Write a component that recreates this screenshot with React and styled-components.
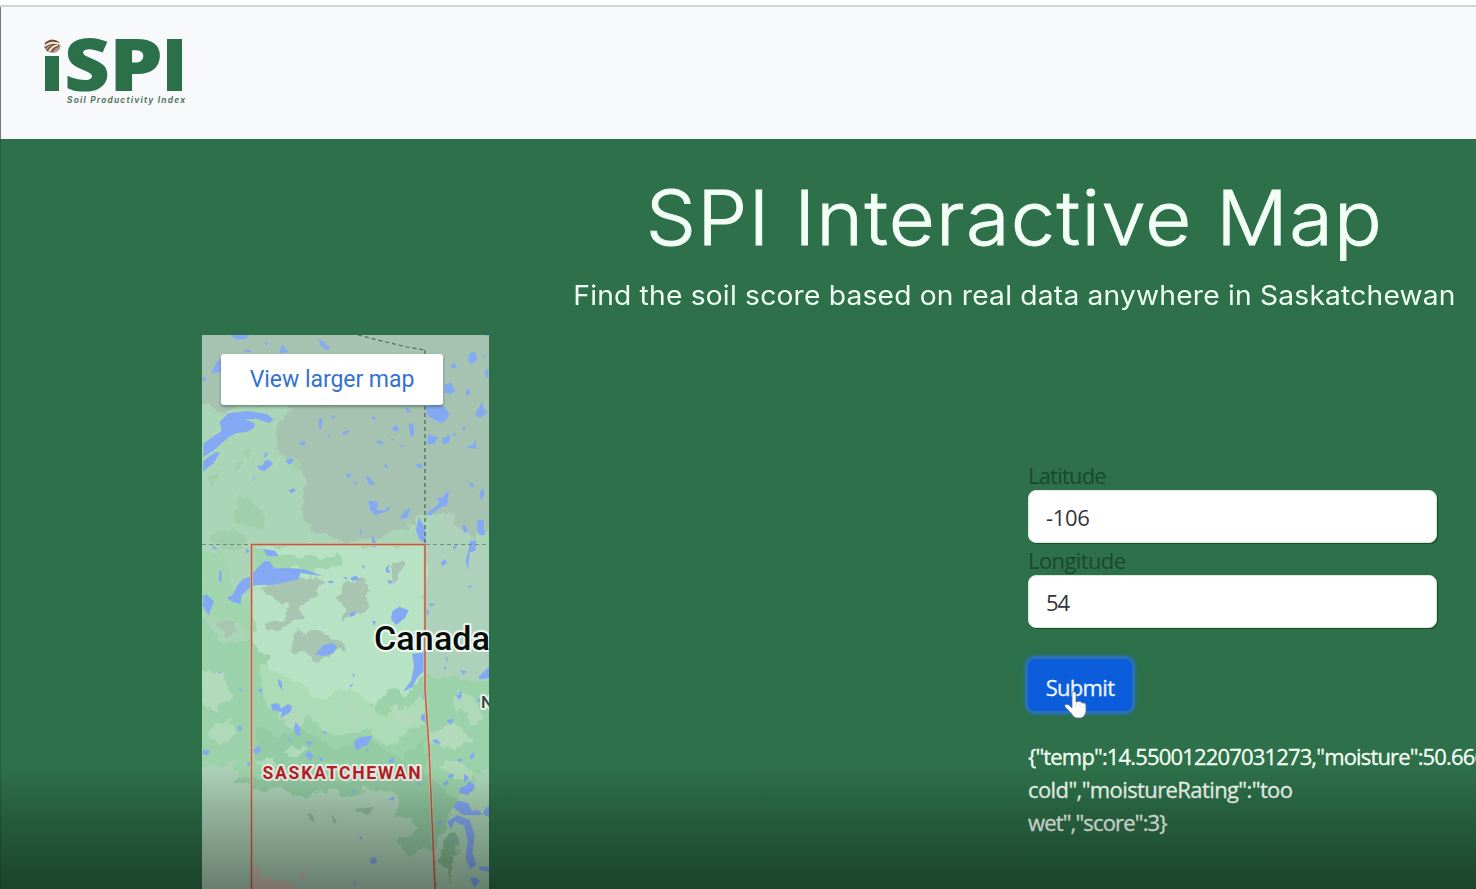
import React from 'react';
import styled, { createGlobalStyle } from 'styled-components';

const GlobalStyle = createGlobalStyle`
  * { box-sizing: border-box; }
  html, body { margin: 0; overflow: hidden; background: #2d7049; }
`;

const Viewport = styled.div`
  position: relative;
  width: 1476px;
  height: 889px;
  overflow: hidden;
  background: #2d7049;
  font-family: 'Open Sans', 'Noto Sans', sans-serif;
  font-size: 22px;
  line-height: 33px;
`;

const Page = styled.div`
  width: 2028px;
`;

const BrowserEdge = styled.div`
  height: 7px;
  background: #fefefe;
  border-bottom: 2px solid #d3d3d4;
`;

const Navbar = styled.header`
  height: 132px;
  padding: 30px 0 0 41px;
  background: #f8f9fb;
  border-left: 1px solid #77797a;
`;

const Hero = styled.main`
  height: 750px;
  padding-top: 34px;
  border-left: 1px solid #265d3c;
  background: #2d7049;
`;

const Heading = styled.h1`
  margin: 0;
  height: 92px;
  text-align: center;
  color: #f3fff6;
  font: 300 75px/90px Inter, sans-serif;
  letter-spacing: ${(p) => p.$spacing};
  transform: scaleX(1.06);
  -webkit-text-stroke: 0.9px #f3fff6;
`;

const Subheading = styled.p`
  margin: 12px 0 0;
  height: 35px;
  text-align: center;
  color: #effff3;
  font: 400 26.5px/36px Inter, sans-serif;
  letter-spacing: ${(p) => p.$spacing};
  transform: scaleX(1.063);
`;

const Columns = styled.div`
  display: flex;
  margin-top: 23px;
  padding-left: 201px;
`;

const MapFrame = styled.section`
  position: relative;
  flex: none;
  width: 287px;
  height: 554px;
  overflow: hidden;
  background: #a6c2b1;
`;

const MapLink = styled.a`
  position: absolute;
  left: 19px;
  top: 19px;
  width: 222px;
  height: 51px;
  border-radius: 3px;
  background: #fff;
  box-shadow: 0 2px 3px rgba(40, 70, 55, 0.45);
  color: #3272d2;
  font: 400 23px/52px Roboto, sans-serif;
  letter-spacing: -0.05px;
  text-align: center;
  white-space: nowrap;
`;

const Form = styled.form`
  width: 409px;
  margin: 124px 0 0 539px;
`;

const Label = styled.label`
  display: block;
  height: 31px;
  color: #1a4a2c;
  line-height: 32px;
  letter-spacing: ${(p) => p.$spacing};
`;

const Input = styled.input`
  display: block;
  width: 409px;
  height: 53px;
  margin: 0 0 ${(p) => p.$gap || '1px'};
  padding: 1px 17px 0;
  border: 1px solid #dbe9df;
  border-radius: 8px;
  background: #fff;
  box-shadow: 1px 1px 0 #115421;
  color: #34343c;
  font: 400 22px/33px 'Open Sans', 'Noto Sans', sans-serif;
  letter-spacing: ${(p) => p.$spacing};
  outline: none;
`;

const Submit = styled.button`
  position: relative;
  display: block;
  width: 104px;
  height: 52px;
  padding: 4px 0 0;
  border: 0;
  border-radius: 7px;
  background: #0b5ddb;
  box-shadow: 0 0 0 3px #2b72b4, 0 0 4px 3px #2b72b4;
  color: #edf5ff;
  font: 500 22px/33px 'Open Sans', 'Noto Sans', sans-serif;
  letter-spacing: -0.7px;
  -webkit-text-stroke: 0.3px #edf5ff;
`;

const Cursor = styled.svg`
  position: absolute;
  left: 36px;
  top: 31px;
`;

const Result = styled.div`
  margin-top: 29px;
  color: #f3fff4;
  font-weight: 500;
  white-space: nowrap;
  -webkit-text-stroke: 0.3px #f3fff4;
`;

const ResultLine = styled.div`
  height: 33px;
  letter-spacing: ${(p) => p.$spacing};
`;

const Shade = styled.div`
  position: absolute;
  left: 0;
  right: 0;
  bottom: 0;
  height: 125px;
  pointer-events: none;
  background: linear-gradient(
    rgba(0, 0, 0, 0),
    rgba(0, 0, 0, 0.03) 10%,
    rgba(0, 0, 0, 0.16) 38%,
    rgba(0, 0, 0, 0.28) 70%,
    rgba(0, 0, 0, 0.4)
  );
`;

const Logo = () => (
  <svg width="150" height="76" viewBox="0 0 150 76" overflow="visible" aria-label="iSPI Soil Productivity Index">
    <path d="M3 19H17V54H3Z" fill="#2b7048" />
    <g fill="#2b7048" fontFamily="'Open Sans', sans-serif" fontWeight="800" fontSize="72">
      <text x="22" y="53.8" textLength="46" lengthAdjust="spacingAndGlyphs">S</text>
      <text x="67" y="53.8" textLength="54" lengthAdjust="spacingAndGlyphs">P</text>
      <text x="119" y="53.8" textLength="27" lengthAdjust="spacingAndGlyphs">I</text>
    </g>
    <text x="25" y="66" textLength="118" fontFamily="Inter, sans-serif" fontWeight="700" fontStyle="italic" fontSize="8.3" fill="#53765f">Soil Productivity Index</text>
    <ellipse cx="10.5" cy="9.3" rx="8" ry="6.8" fill="#b69d8b" />
    <path d="M3 7Q9 1 17 6M3 11Q8 5 17 8M5 14Q8 9 14 7M10 15Q12 10 17 9" fill="none" stroke="#754b31" strokeWidth="1.7" />
    <path d="M3 9Q9 4 18 7M7 14Q10 9 16 8" fill="none" stroke="#f4eee9" strokeWidth="1.5" />
  </svg>
);

const Lakes = ({ d }) => <path d={d} fill="#83a9f4" />;

const ProvinceMap = () => (
  <svg width="287" height="554" viewBox="0 0 287 554">
    <defs>
      <filter id="coast" x="-5%" y="-5%" width="110%" height="110%" colorInterpolationFilters="sRGB">
        <feTurbulence type="fractalNoise" baseFrequency="0.07" numOctaves="3" seed="8" />
        <feDisplacementMap in="SourceGraphic" scale="16" xChannelSelector="R" yChannelSelector="G" />
      </filter>
    </defs>
    <path d="M0 0H287V554H0Z" fill="#a6c2b1" />
    <g filter="url(#coast)">
      <path d="M-10 66L17 78L45 70L90 71L78 86L75 116L98 129L104 151L100 178L111 195L146 210L185 199L219 182L240 177L270 204L297 193V570H-10Z" fill="#abd5b7" />
      <path d="M50 210H224V420H50Z" fill="#b7e2c4" />
      <path d="M242 177L275 205L295 230V355H226V188Z" fill="#aed1bc" />
      <path d="M50 212L94 222L137 219L140 229L112 239L90 234L50 243ZM0 218L18 215L31 254L48 268L50 307L27 282L0 286Z" fill="#a0d5ae" />
      <path d="M-10 278L23 307L50 307L69 334L85 365L105 374L125 364L162 380L185 356L205 360L224 340L295 349V423L238 475L224 456L196 441L171 457L140 447L103 461L88 446L45 452L24 439L-10 439Z" fill="#9bd2a9" />
      <path d="M60 330L97 348L120 365L147 353L182 381L222 363V390L188 410L161 395L131 401L107 380L85 381L62 366Z" fill="#abdcb6" />
      <path d="M54 388L75 403L99 391L132 415L167 404L196 425L223 401V448L192 437L168 448L132 424L96 438L54 421Z" fill="#93cca2" />
      <path d="M-10 438L28 427L43 446L50 448L78 450L103 466L119 454L140 462L191 452L204 477L199 489L214 500L198 517L233 521L240 570H-10Z" fill="#add2b8" />
      <path d="M34 440L62 445L102 438L141 446L187 438L226 440L252 462L246 486L233 516H204L195 506L218 493L193 478L194 459L174 454L143 461L119 452L103 464L84 456L52 454L34 448Z" fill="#91c8a0" />
      <path d="M0 337L21 337L31 364L13 375L0 368ZM185 373L216 375V389L198 392ZM225 395L253 389L271 404L251 414L226 408Z" fill="#b2dabb" />
      <path d="M246 504L254 496L257 521L247 545L235 525Z" fill="#86bd94" />
      <path d="M75 374L95 371L110 382L94 391L79 385ZM12 389L27 382L36 401L21 409L7 400ZM143 377L155 371L163 382L151 390ZM235 431L256 423L276 440L255 446ZM55 428L66 420L76 431L64 435ZM256 354L275 365L284 384L269 391L253 374ZM88 408L104 415L99 423L84 420Z" fill="#afd9b8" />
      <path d="M59 250L93 245L111 239L118 249L111 264L97 271L101 281L91 291L66 296L61 289L79 284L88 270L60 258ZM92 300L115 291L129 305L146 315L129 317L113 328L104 320L88 312ZM142 249L160 243L170 254L161 262L167 272L153 278L139 287L143 276L137 264ZM18 284L34 287L28 302L15 292ZM188 230L202 225L200 237L190 247Z" fill="#a7c5b1" />
      <path d="M39 160L51 166L64 185L59 194L36 188L32 174ZM4 200L32 194L45 202L43 210L22 216L8 208ZM8 142L14 138L16 144L9 153ZM86 126L101 131L91 136ZM35 133L41 128L41 135L30 142ZM41 115L52 121L45 125Z" fill="#a1cfac" />
    </g>
    <path d="M42 554L48 550L51 543L57 536L61 544L68 541L75 547L85 545L94 554ZM50 535L55 530L58 535L52 540ZM99 538L103 534L103 542L100 546L96 545Z" fill="#cdbfb2" />

    <g transform="translate(-7,-5) scale(.33333)">
      <Lakes d="M106 15H164L150 28L121 27ZM208 33L219 40L213 48ZM260 42L281 67L254 70ZM371 29L388 35L393 45L406 50L397 60L377 48ZM22 145L30 140L35 148L23 155ZM49 129L65 97L78 86V127ZM74 276L100 250L157 243L215 252L236 268L222 280L184 266L148 268L180 279L178 293L158 305L124 309L102 321L56 361L25 381V340L80 303ZM62 365L74 369L56 399L24 425V394ZM146 62L163 59L171 67H151Z" />
      <Lakes d="M211 367L220 371L205 386ZM186 407L203 406L211 391L225 391L234 402L209 423L195 421ZM178 441L183 442L169 455ZM271 393L286 384L299 390L284 405ZM280 482L295 474L302 483L288 490ZM314 339L327 332L333 343L318 347ZM370 270L380 263L383 278L378 299L370 293L373 283ZM410 257L424 258L411 268ZM400 308L407 319L402 323ZM442 306L466 300L458 309L446 315ZM530 261L537 258L544 270L533 269ZM587 296L604 286L614 298L604 305ZM543 336L550 330L567 339L561 344ZM587 328L596 325L594 333ZM618 342L627 349L619 354ZM641 281H655L658 315L648 321L644 305ZM630 230L647 241L650 247H636ZM565 408L573 402L581 411L573 413Z" />
      <Lakes d="M661 406L679 399L681 415L668 413ZM453 430L468 433L463 446L455 439ZM474 452L488 460L480 466ZM510 437L524 442L541 465L530 466L519 457ZM520 512L545 513L550 524L542 541L568 543L587 526L580 543L540 555L526 541ZM641 535L647 536L635 565H615L624 551ZM690 230L716 218L746 228L764 252L752 272L738 279L701 260ZM699 313L729 322L718 341L696 343ZM740 326L767 314L762 337L744 344ZM774 308L785 313L777 321ZM801 291L816 293L806 302ZM812 351L832 345L845 330L842 357ZM840 254L861 216L868 240L879 246L855 264ZM870 122L880 117V145L872 139ZM812 180L824 178L826 190L815 198ZM748 164L767 157L781 184L767 193L749 187ZM768 105L778 100L788 112L770 115ZM825 70L840 65L847 86L831 103L819 93ZM861 80L879 70L867 84ZM819 456L836 462L834 473L824 468ZM852 494L861 476L869 484L860 512ZM724 500L740 504L762 480L756 527L738 530L707 557L695 552L735 518ZM882 15L878 20L871 15Z" />
    </g>
    <g transform="translate(-7,175) scale(.33333)">
      <Lakes d="M205 118L240 122L251 139H217ZM95 264L113 255L127 227L143 207L165 200L188 173L208 153L224 154L239 176L276 174L326 177L385 199L316 189L311 208L238 224L182 225L164 233L139 257L137 283L114 276ZM24 257L36 254L57 273L41 315L23 288ZM55 105L68 121L53 115ZM155 114L164 125L152 130ZM74 176L80 191L79 220L71 208ZM397 213L414 212L416 219L403 220ZM444 200L458 203L453 209ZM466 203L483 197L494 208L471 214ZM501 165L510 169L505 178ZM584 160L571 176L576 189L586 187L579 175ZM575 211L594 212L585 224ZM465 310L480 302L479 317L464 320ZM592 304L613 290L641 301L631 323L604 345L588 328ZM531 333H542L539 347ZM360 432L386 406L413 398L426 411L415 430L386 439ZM652 432L692 427L687 482L667 503L652 531L624 545L648 512L657 470Z" />
      <Lakes d="M494 55L503 65L497 76ZM531 75L543 95L540 115L530 107ZM534 0H568L539 16ZM630 0L640 8L620 28ZM671 21L690 53L693 100L674 90L663 61ZM706 0H714L689 23ZM737 160L750 147L756 159L743 168ZM774 109L788 106L777 120ZM801 45L812 47L819 64L807 68ZM848 29L867 31L866 55L872 74L854 76L845 58ZM825 92H844L841 122L824 127L819 179L812 151L821 120ZM818 231L831 224L827 235ZM704 280L725 284L704 289ZM694 298L704 302L694 323ZM744 474L754 468L753 479ZM751 438L758 445L756 458ZM796 480L815 484L805 494ZM850 501L882 470V505L856 508ZM248 507L259 513L264 542L252 528ZM190 539L203 535L200 550ZM464 524L476 525L466 532ZM472 491L480 494L476 503ZM130 536H140L137 545ZM67 485H80L75 491ZM790 551L799 541L799 560ZM683 555L692 560L687 569Z" />
    </g>
    <g transform="translate(-7,360) scale(.33333)">
      <Lakes d="M228 27L250 24L258 41L280 26L292 35L286 51L256 70L261 51L231 45ZM126 96L138 91L142 104L132 109ZM24 166L45 166L41 179L24 179ZM175 164L190 153L199 165L182 180ZM158 202L174 201L171 214H158ZM302 80L317 102L315 126L302 117L297 98ZM277 133L285 128L291 142ZM332 138L354 141L342 153ZM330 180L343 168L356 184L345 195ZM371 189L384 187L381 200ZM381 113L390 107L399 117ZM476 138L495 127L532 122L518 149L482 166ZM514 161L524 163L517 173ZM582 196L597 185L596 202L582 205ZM470 287H485L478 295ZM579 313L599 305L596 317ZM492 424L502 425L499 437ZM526 492L537 485L547 497L539 509L527 504ZM477 558L482 556L480 580Z" />
      <Lakes d="M677 62L689 55L692 83L679 75ZM755 76L777 71L767 91ZM710 136L726 132L738 147L719 144ZM784 194L802 188L796 203ZM824 182L840 169L837 187L826 193ZM664 267L674 260L675 271ZM743 267L757 255L761 267L748 272ZM757 243L774 234L776 244L766 252ZM794 280L813 271L824 258L839 270L838 283L817 300L792 293ZM807 237L818 244L822 252L807 262ZM774 335L790 317L820 324L831 349L849 344L863 359L837 361L802 359ZM756 380L787 361L825 376L839 422L833 474L845 510L824 522L812 488L818 439L808 393L780 379L768 403ZM726 379L743 380L731 390ZM769 428L779 434L773 443ZM852 513L882 516V530L854 526ZM824 551L842 547L855 560L838 577ZM864 350L882 331V366L866 359ZM780 0H800L795 16ZM845 17L855 10L855 22Z" />
      <path d="M336 355L352 357L360 383L346 375ZM410 359L425 378L420 386L412 377ZM482 341L535 336L526 355L513 360L501 350L482 350Z" fill="#8fbe9b" />
    </g>

    <path d="M156 0L184 7L205 12L223 15" fill="none" stroke="#566e60" strokeWidth="1.2" strokeDasharray="4 3" />
    <path d="M223 15V210V355L226 399L234 554" fill="none" stroke="#53695b" strokeWidth="1.3" strokeDasharray="4 3" />
    <path d="M0 209.5H287" fill="none" stroke="#6f9080" strokeWidth="1" strokeDasharray="4 3" />
    <path d="M49.5 554V209.5H223V355L227 414L233 554" fill="none" stroke="#d8c5a7" strokeWidth="3" />
    <path d="M49.5 554V209.5H223V355L227 414L233 554" fill="none" stroke="#b65f48" strokeWidth="1.5" />
    <g fontFamily="Roboto, sans-serif" paintOrder="stroke" strokeLinejoin="round">
      <text x="172" y="314.5" fontSize="34" fontWeight="500" textLength="116" fill="#070b09" stroke="#eff9f1" strokeWidth="4">Canada</text>
      <text x="60.5" y="443.5" fontSize="17.5" fontWeight="700" textLength="158" fill="#b51f26" stroke="#e5eee4" strokeWidth="4">SASKATCHEWAN</text>
      <text x="279" y="373" fontSize="17" fontWeight="500" fill="#34423a" stroke="#e8f4eb" strokeWidth="4">N</text>
    </g>
  </svg>
);

const Pointer = () => (
  <Cursor width="26" height="31" viewBox="0 0 26 31">
    <path d="M8 2Q10 0 12 3V12Q17 10 18 13Q22 12 22 15V22Q21 27 17 28H12Q9 27 7 23L1 17Q0 13 5 15L8 18Z" fill="#fff" stroke="#536d91" strokeWidth=".8" />
    <path d="M12 13V17M16 13V17M20 15V18" stroke="#c8d0df" strokeWidth=".7" />
  </Cursor>
);

export default function App() {
  return (
    <Viewport>
      <GlobalStyle />
      <Page>
        <BrowserEdge />
        <Navbar><Logo /></Navbar>
        <Hero>
          <Heading $spacing="1.2px">SPI Interactive Map</Heading>
          <Subheading $spacing="0.2px">Find the soil score based on real data anywhere in Saskatchewan</Subheading>
          <Columns>
            <MapFrame>
              <ProvinceMap />
              <MapLink>View larger map</MapLink>
            </MapFrame>
            <Form>
              <Label $spacing="-0.8px">Latitude</Label>
              <Input defaultValue="-106" $spacing="-0.3px" />
              <Label $spacing="-0.6px">Longitude</Label>
              <Input defaultValue="54" $gap="31px" $spacing="-1.2px" />
              <Submit type="button">Submit<Pointer /></Submit>
              <Result>
                <ResultLine $spacing="-0.84px">{'{"temp":14.550012207031273,"moisture":50.666'}</ResultLine>
                <ResultLine $spacing="-0.6px">{'cold","moistureRating":"too'}</ResultLine>
                <ResultLine $spacing="-0.85px">{'wet","score":3}'}</ResultLine>
              </Result>
            </Form>
          </Columns>
        </Hero>
      </Page>
      <Shade />
    </Viewport>
  );
}
